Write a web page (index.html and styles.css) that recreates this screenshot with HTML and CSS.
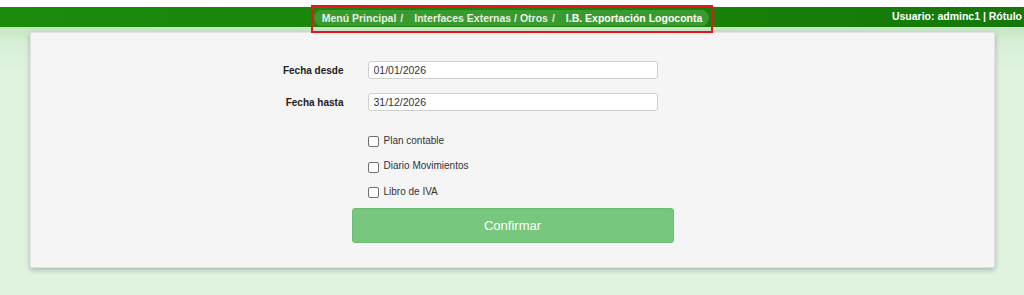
FILE: index.html
```html
<!DOCTYPE html>
<html lang="es">
<head>
  <meta charset="UTF-8">
  <title>I.B. Exportación Logoconta</title>
  <link rel="stylesheet" href="styles.css">
</head>
<body>
  <header class="topbar">
    <div class="highlight">
      <nav class="breadcrumb">
        <span class="crumb">Menú Principal</span>
        <span class="sep">/</span>
        <span class="crumb">Interfaces Externas / Otros</span>
        <span class="sep">/</span>
        <span class="crumb current">I.B. Exportación Logoconta</span>
      </nav>
    </div>
    <div class="user">Usuario: adminc1 | Rótulo</div>
  </header>

  <main class="card">
    <form class="export-form">
      <label class="field-label" for="desde">Fecha desde</label>
      <input class="field-input" id="desde" type="text" value="01/01/2026">
      <span></span>

      <label class="field-label" for="hasta">Fecha hasta</label>
      <input class="field-input" id="hasta" type="text" value="31/12/2026">
      <span></span>

      <div class="checks">
        <label class="check"><input type="checkbox"> Plan contable</label>
        <label class="check"><input type="checkbox"> Diario Movimientos</label>
        <label class="check"><input type="checkbox"> Libro de IVA</label>
      </div>

      <button type="button" class="confirm-btn">Confirmar</button>
    </form>
  </main>
</body>
</html>
```

FILE: styles.css
```css
body {
  margin: 0;
  padding-top: 7px;
  height: 288px;
  overflow: hidden;
  font-family: 'Liberation Sans', Arial, sans-serif;
  background: linear-gradient(#ffffff 0, #ffffff 7px, #c7e6c5 27px, #d8efd7 45px, #dff3df 70px, #dff3df 100%);
}

/* barra superior */
.topbar {
  display: grid;
  grid-template-columns: minmax(0, 1fr) auto minmax(0, 1fr);
  align-items: start;
  height: 20px;
  background: linear-gradient(to right, #1a8b0b 0%, #188308 60%, #157808 100%);
  color: #fff;
  position: relative;
  z-index: 2;
}
.highlight {
  grid-column: 2;
  margin-top: -2px;
  border: 2px solid #e8141c;
  padding: 3px 2px 5px 1px;
}
.breadcrumb {
  display: flex;
  align-items: center;
  height: 16px;
  padding: 0 7px 0 8px;
  border-radius: 8px;
  background: #3a9a30;
  font-size: 10.5px;
  font-weight: bold;
  white-space: nowrap;
}
.crumb {
  color: #e6efe4;
}
.crumb.current {
  color: #fff;
}
.sep {
  color: #dfe9dc;
  margin: 0 11px 0 4px;
}
.user {
  grid-column: 3;
  justify-self: end;
  margin-right: 2px;
  margin-top: 3px;
  font-size: 10.5px;
  font-weight: bold;
  white-space: nowrap;
}

/* tarjeta */
.card {
  width: 963px;
  margin: 5px 0 0 30px;
  padding: 28px 0 24px;
  background: #f5f5f5;
  border: 1px solid #e2e2e2;
  border-radius: 2px;
  box-shadow: 0 2px 5px rgba(60, 70, 90, 0.35);
}
.export-form {
  display: grid;
  grid-template-columns: 1fr 290px 1fr;
  column-gap: 24px;
  row-gap: 14px;
  align-items: center;
}
.field-label {
  justify-self: end;
  font-size: 10px;
  font-weight: bold;
  color: #222;
}
.field-input {
  box-sizing: border-box;
  width: 290px;
  height: 18px;
  margin: 0;
  padding: 0 5px;
  border: 1px solid #cfcfcf;
  border-radius: 3px;
  background: #fff;
  font-family: 'Liberation Sans', Arial, sans-serif;
  font-size: 10.5px;
  color: #333;
}
.checks {
  grid-column: 2;
  display: flex;
  flex-direction: column;
  gap: 9.5px;
  margin-top: 7px;
}
.check {
  display: flex;
  align-items: center;
  gap: 5px;
  height: 16px;
  font-size: 10px;
  color: #333;
}
.check input {
  appearance: none;
  width: 11px;
  height: 11px;
  margin: 3px 0 0 0;
  border: 1px solid #6f6f6f;
  border-radius: 2px;
  background: #fff;
}
.confirm-btn {
  grid-column: 1 / -1;
  justify-self: center;
  width: 322px;
  height: 35px;
  margin-top: -5px;
  border: 1px solid #6cbd74;
  border-radius: 3px;
  background: #77c77f;
  color: #fff;
  font-family: 'Liberation Sans', Arial, sans-serif;
  font-size: 13px;
}
```
